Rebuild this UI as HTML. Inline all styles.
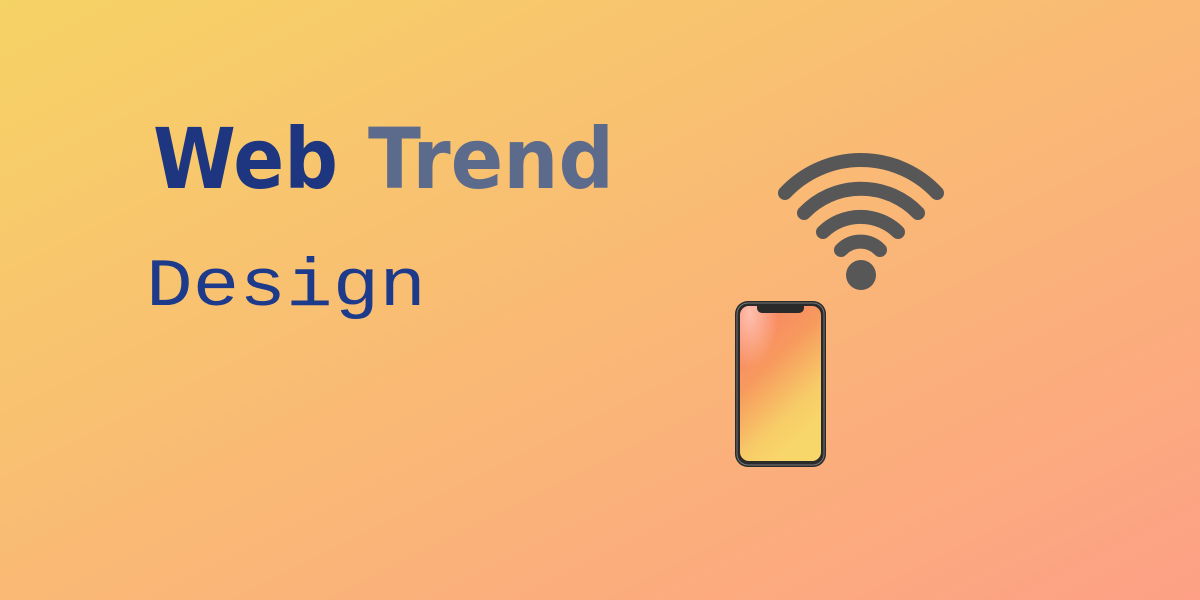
<!DOCTYPE html>
<html><head><meta charset="utf-8"><style>
html,body{margin:0;padding:0}
body{width:1200px;height:600px;overflow:hidden;background:linear-gradient(to bottom right,#f6d365 0%,#fda085 100%);position:relative}
svg{position:absolute;left:0;top:0}
</style></head><body>
<svg width="1200" height="600" viewBox="0 0 1200 600">
<defs>
<linearGradient id="scr" x1="0" y1="0" x2="0.5" y2="1">
<stop offset="0" stop-color="#fb7d68"/>
<stop offset="0.45" stop-color="#f79a5e"/>
<stop offset="0.8" stop-color="#f7cc68"/>
<stop offset="1" stop-color="#f8d76a"/>
</linearGradient>
<radialGradient id="gl" cx="0.12" cy="0.05" r="0.35">
<stop offset="0" stop-color="#ffd0c0" stop-opacity="0.8"/>
<stop offset="1" stop-color="#ffd0c0" stop-opacity="0"/>
</radialGradient>
</defs>
<text x="153" y="188" font-family="DejaVu Sans, sans-serif" font-weight="bold" font-size="84" fill="#1e3580" textLength="185" lengthAdjust="spacingAndGlyphs">Web</text>
<text x="368" y="188" font-family="DejaVu Sans, sans-serif" font-weight="bold" font-size="84" fill="#5c6a8c" textLength="246" lengthAdjust="spacingAndGlyphs">Trend</text>
<text x="146" y="305" font-family="Liberation Mono, monospace" font-size="68" fill="#1e3a8a" textLength="280" lengthAdjust="spacingAndGlyphs">Design</text>
<g fill="none" stroke="#575757" stroke-width="14" stroke-linecap="round">
<path d="M785 193 A104 104 0 0 1 937 193"/>
<path d="M804 213 A79 79 0 0 1 918 213"/>
<path d="M823 232 A54 54 0 0 1 898 232"/>
<path d="M841 250 A27 27 0 0 1 880 250"/>
</g>
<circle cx="861" cy="275" r="15" fill="#575757"/>
<rect x="735" y="301" width="91" height="166" rx="13" fill="#2a2a2a"/>
<rect x="737" y="303" width="87" height="162" rx="11" fill="none" stroke="#777" stroke-width="1"/>
<rect x="740" y="306" width="81" height="155" rx="9" fill="url(#scr)"/>
<rect x="740" y="306" width="81" height="155" rx="9" fill="url(#gl)"/>
<path d="M757 305 h47 v3 a5 5 0 0 1 -5 5 h-37 a5 5 0 0 1 -5 -5z" fill="#2a2a2a"/>
</svg>
</body></html>
